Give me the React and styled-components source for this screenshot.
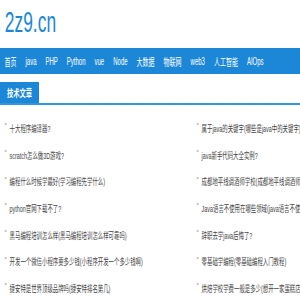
import styled, { createGlobalStyle } from "styled-components";

const GlobalStyle = createGlobalStyle`
  html, body {
    margin: 0;
    padding: 0;
    overflow: hidden;
    background: #fff;
  }
  body {
    font-family: "Liberation Sans", "Noto Sans CJK SC", sans-serif;
  }
`;

const BLUE = "#1c87d7";

// the reference is a horizontally squeezed capture, so the page is drawn
// wide and pressed to fit
const Page = styled.div`
  width: 500px;
  transform: scale(0.6, 1);
  transform-origin: 0 0;
`;

const Header = styled.header`
  padding: 8px 0 11px 8px;
`;

const Logo = styled.a`
  display: block;
  font-size: 29px;
  line-height: 29px;
  color: ${BLUE};
  text-decoration: none;
`;

const Nav = styled.nav`
  height: 26px;
  background: ${BLUE};
  display: flex;
  align-items: center;
`;

const NavItem = styled.a`
  padding: 0 7.5px;
  font-size: 10px;
  color: #fff;
  text-decoration: none;
  white-space: nowrap;
`;

const Section = styled.section`
  margin-top: 8px;
`;

const TabBar = styled.div`
  display: flex;
  border-bottom: 2px solid #3196e0;
`;

const Tab = styled.div`
  height: 21px;
  padding: 0 11.5px;
  background: ${BLUE};
  color: #fff;
  font-size: 10.5px;
  font-weight: bold;
  display: flex;
  align-items: center;
`;

const List = styled.ul`
  list-style: none;
  margin: 0;
  padding: 10px 0 0;
  display: grid;
  grid-template-columns: 320px 1fr;
  grid-auto-flow: column;
  grid-template-rows: repeat(7, 26.7px);
`;

const Item = styled.li`
  display: flex;
  align-items: center;
  padding-left: 8px;
  white-space: nowrap;
  font-size: 9px;
  color: #444;
`;

const Dot = styled.span`
  width: 3px;
  height: 2px;
  margin: 0 5px 8px 0;
  background: #c4c4c4;
  flex: none;
`;

const navLinks = [
  "首页", "java", "PHP", "Python", "vue", "Node",
  "大数据", "物联网", "web3", "人工智能", "AIOps",
];

const articles = [
  "十大程序编译器?",
  "scratch怎么做3D游戏?",
  "编程什么时候学最好(学习编程先学什么)",
  "python官网下载不了?",
  "黑马编程培训怎么样(黑马编程培训怎么样可靠吗)",
  "开发一个微信小程序要多少钱(小程序开发一个多少钱啊)",
  "捷安特是世界顶级品牌吗(捷安特排名第几)",
  "属于java的关键字(哪些是java中的关键字)",
  "java新手代码大全实例?",
  "成都地平线调酒师学校(成都地平线调酒师培训学校)",
  "Java语言不使用在哪些领域(java语言不使用在哪些领域)",
  "辞职去学java后悔了?",
  "零基础学编程(零基础编程入门教程)",
  "烘焙学校学费一般是多少(想开一家蛋糕店需要学多久)",
];

export default function App() {
  return (
    <>
      <GlobalStyle />
      <Page>
        <Header>
          <Logo href="#">2z9.cn</Logo>
        </Header>
        <Nav>
          {navLinks.map((n) => (
            <NavItem key={n} href="#">
              {n}
            </NavItem>
          ))}
        </Nav>
        <Section>
          <TabBar>
            <Tab>技术文章</Tab>
          </TabBar>
          <List>
            {articles.map((a) => (
              <Item key={a}>
                <Dot />
                {a}
              </Item>
            ))}
          </List>
        </Section>
      </Page>
    </>
  );
}
